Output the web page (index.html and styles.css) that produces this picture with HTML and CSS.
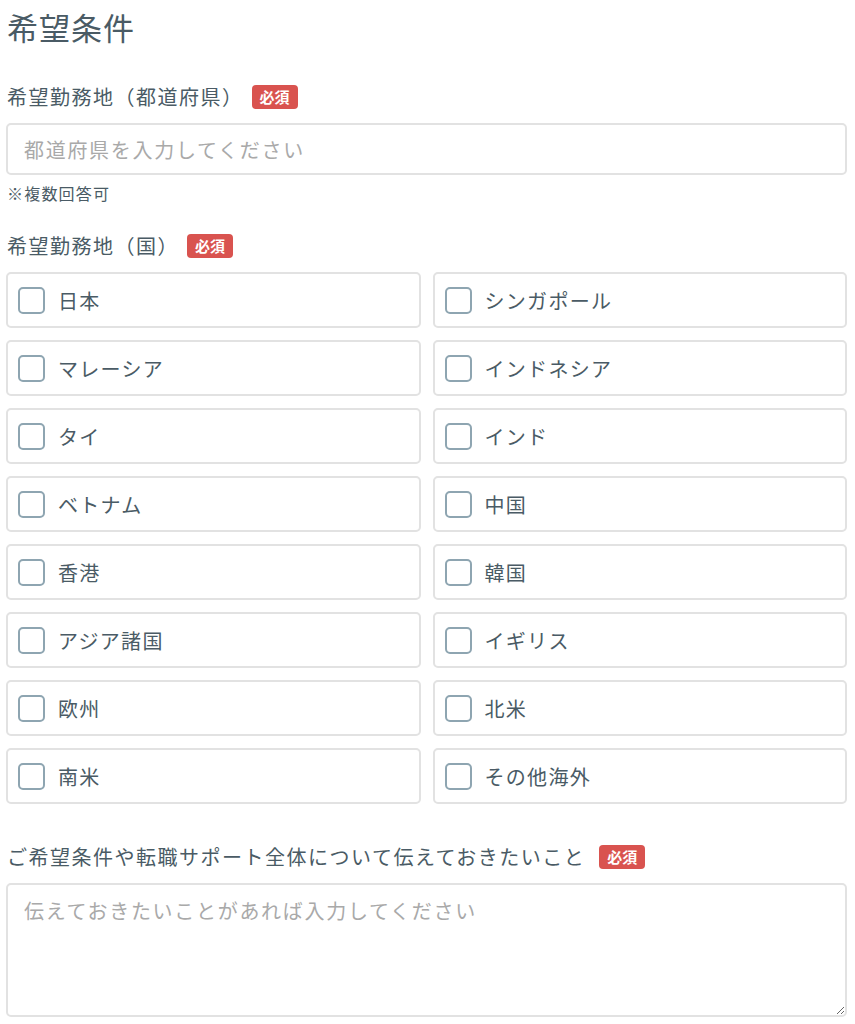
FILE: index.html
```html
<!DOCTYPE html>
<html lang="ja">
<head>
  <meta charset="UTF-8" />
  <meta name="viewport" content="width=device-width, initial-scale=1.0"/>
  <title>希望条件</title>
  <link rel="stylesheet" href="styles.css">
</head>
<body>
  <div class="form-wrap">
    <h2 class="section-title">希望条件</h2>

    <div class="field field-first">
      <label class="field-label">希望勤務地（都道府県）<span class="badge">必須</span></label>
      <input type="text" class="text-input" placeholder="都道府県を入力してください" />
      <p class="note">※複数回答可</p>
    </div>

    <div class="field">
      <label class="field-label">希望勤務地（国）<span class="badge">必須</span></label>
      <div class="check-grid">
        <label class="check-item"><input type="checkbox" /><span>日本</span></label>
        <label class="check-item"><input type="checkbox" /><span>シンガポール</span></label>
        <label class="check-item"><input type="checkbox" /><span>マレーシア</span></label>
        <label class="check-item"><input type="checkbox" /><span>インドネシア</span></label>
        <label class="check-item"><input type="checkbox" /><span>タイ</span></label>
        <label class="check-item"><input type="checkbox" /><span>インド</span></label>
        <label class="check-item"><input type="checkbox" /><span>ベトナム</span></label>
        <label class="check-item"><input type="checkbox" /><span>中国</span></label>
        <label class="check-item"><input type="checkbox" /><span>香港</span></label>
        <label class="check-item"><input type="checkbox" /><span>韓国</span></label>
        <label class="check-item"><input type="checkbox" /><span>アジア諸国</span></label>
        <label class="check-item"><input type="checkbox" /><span>イギリス</span></label>
        <label class="check-item"><input type="checkbox" /><span>欧州</span></label>
        <label class="check-item"><input type="checkbox" /><span>北米</span></label>
        <label class="check-item"><input type="checkbox" /><span>南米</span></label>
        <label class="check-item"><input type="checkbox" /><span>その他海外</span></label>
      </div>
    </div>

    <div class="field field-last">
      <label class="field-label">ご希望条件や転職サポート全体について伝えておきたいこと<span class="badge badge-wide">必須</span></label>
      <textarea class="text-area" placeholder="伝えておきたいことがあれば入力してください"></textarea>
    </div>
  </div>
</body>
</html>
```

FILE: styles.css
```css
body {
  font-family: "Noto Sans CJK JP", "Noto Sans", sans-serif;
  background: #fff;
  margin: 0;
  color: #4a5b65;
}

.form-wrap {
  width: 841px;
  padding: 0 0 0 6px;
}

.section-title {
  font-size: 31px;
  font-weight: normal;
  line-height: 1;
  margin: 11px 0 0 1px;
  letter-spacing: 1px;
}

.field {
  margin-top: 30px;
}

.field.field-first {
  margin-top: 42px;
}

.field.field-last {
  margin-top: 40px;
}

.field-label {
  display: flex;
  align-items: center;
  font-size: 20px;
  line-height: 26px;
  letter-spacing: 1.5px;
  margin: 0 0 13px 1px;
}

.badge {
  display: inline-block;
  background: #d9534f;
  color: #fff;
  font-size: 15px;
  font-weight: bold;
  line-height: 24px;
  padding: 0 8px;
  border-radius: 4px;
  margin-left: 8px;
  letter-spacing: 0;
}

.badge.badge-wide {
  margin-left: 14px;
}

.text-input,
.text-area {
  display: block;
  box-sizing: border-box;
  width: 100%;
  border: 2px solid #e2e2e2;
  border-radius: 5px;
  font-family: inherit;
  font-size: 20px;
  color: #4a5b65;
  letter-spacing: 1.7px;
  padding: 0 16px;
  margin: 0;
}

.text-input {
  height: 52px;
}

.text-area {
  height: 134px;
  padding-top: 11px;
  resize: vertical;
}

.text-input::placeholder,
.text-area::placeholder {
  color: #a9a9a9;
}

.note {
  font-size: 16px;
  letter-spacing: 1.2px;
  margin: 8px 0 0 1px;
  line-height: 20px;
}

.check-grid {
  display: grid;
  grid-template-columns: 1fr 1fr;
  gap: 12px;
}

.check-item {
  display: flex;
  align-items: center;
  height: 56px;
  box-sizing: border-box;
  border: 2px solid #e2e2e2;
  border-radius: 5px;
  padding-left: 10px;
  font-size: 20px;
  letter-spacing: 1.3px;
}

.check-item input {
  appearance: none;
  width: 27px;
  height: 27px;
  margin: 0 13px 0 0;
  border: 2px solid #8ea5b1;
  border-radius: 5px;
  background: #fff;
  box-sizing: border-box;
}
```
